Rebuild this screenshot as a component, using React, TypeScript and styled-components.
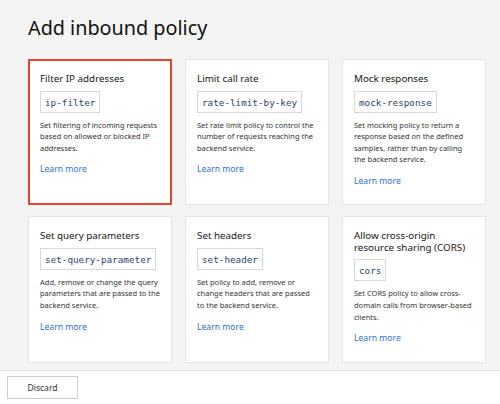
import React from 'react';
import styled, {createGlobalStyle} from 'styled-components';

const GlobalStyle = createGlobalStyle`
  html, body {
    margin: 0;
    padding: 0;
    background: #f4f4f4;
  }
  body {
    font-family: 'Noto Sans', 'Open Sans', Arial, sans-serif;
    color: #222;
  }
`;

const Page = styled.div`
  display: flex;
  flex-direction: column;
  width: 500px;
  height: 404px;
  overflow: hidden;
`;

const Main = styled.main`
  flex: 1;
  padding: 13px 14px 0 28px;
  background: #f4f4f4;
  border-bottom: 1px solid #e4e4e4;
`;

const Title = styled.h1`
  margin: 0 0 16px;
  font-size: 19.8px;
  line-height: 30px;
  font-weight: 400;
  color: #111;
`;

const Grid = styled.div`
  display: grid;
  grid-template-columns: repeat(3, 144px);
  column-gap: 13px;
  row-gap: 11px;
`;

const Card = styled.div<{$selected?: boolean}>`
  display: flex;
  flex-direction: column;
  align-items: flex-start;
  min-height: 146px;
  box-sizing: border-box;
  padding: ${(p) => (p.$selected ? '10px 10px 16px' : '11px 11px 17px')};
  background: #fff;
  border: ${(p) => (p.$selected ? '2px solid #e8432e' : '1px solid #e6e6e6')};
`;

const CardTitle = styled.div`
  font-size: 9.8px;
  line-height: 11.5px;
  padding: 2px 0;
  color: #151515;
`;

const Code = styled.code`
  margin-top: 4px;
  padding: 0 4px;
  height: 22px;
  line-height: 21px;
  box-sizing: border-box;
  border: 1px solid #d4d8de;
  font-family: 'DejaVu Sans Mono', 'Liberation Mono', monospace;
  font-size: 9.3px;
  color: #2c4370;
  background: #fff;
`;

const Description = styled.p`
  margin: 7px 0 0;
  font-size: 7.5px;
  line-height: 11.6px;
  color: #333;
`;

const LearnMore = styled.a`
  margin-top: 10px;
  font-size: 8.6px;
  line-height: 11.5px;
  color: #2f70cf;
  text-decoration: none;
  cursor: pointer;
`;

const Footer = styled.footer`
  display: flex;
  align-items: center;
  height: 33px;
  padding: 0 7px;
  background: #fff;
`;

const Button = styled.button`
  width: 71px;
  height: 23px;
  padding: 0;
  background: #fff;
  border: 1px solid #cfcfcf;
  font-family: inherit;
  font-size: 8.6px;
  color: #333;
  cursor: pointer;
`;

type Policy = {
  title: string;
  code: string;
  description: string;
};

const POLICIES: Policy[] = [
  {
    title: 'Filter IP addresses',
    code: 'ip-filter',
    description: 'Set filtering of incoming requests based on allowed or blocked IP addresses.'
  },
  {
    title: 'Limit call rate',
    code: 'rate-limit-by-key',
    description: 'Set rate limit policy to control the number of requests reaching the backend service.'
  },
  {
    title: 'Mock responses',
    code: 'mock-response',
    description:
      'Set mocking policy to return a response based on the defined samples, rather than by calling the backend service.'
  },
  {
    title: 'Set query parameters',
    code: 'set-query-parameter',
    description: 'Add, remove or change the query parameters that are passed to the backend service.'
  },
  {
    title: 'Set headers',
    code: 'set-header',
    description: 'Set policy to add, remove or change headers that are passed to the backend service.'
  },
  {
    title: 'Allow cross-origin resource sharing (CORS)',
    code: 'cors',
    description: 'Set CORS policy to allow cross-domain calls from browser-based clients.'
  }
];

const App: React.FC = () => {
  return (
    <>
      <GlobalStyle />
      <Page>
        <Main>
          <Title>Add inbound policy</Title>
          <Grid>
            {POLICIES.map((policy, i) => (
              <Card key={policy.code} $selected={i === 0}>
                <CardTitle>{policy.title}</CardTitle>
                <Code>{policy.code}</Code>
                <Description>{policy.description}</Description>
                <LearnMore>Learn more</LearnMore>
              </Card>
            ))}
          </Grid>
        </Main>
        <Footer>
          <Button>Discard</Button>
        </Footer>
      </Page>
    </>
  );
};

export default App;
